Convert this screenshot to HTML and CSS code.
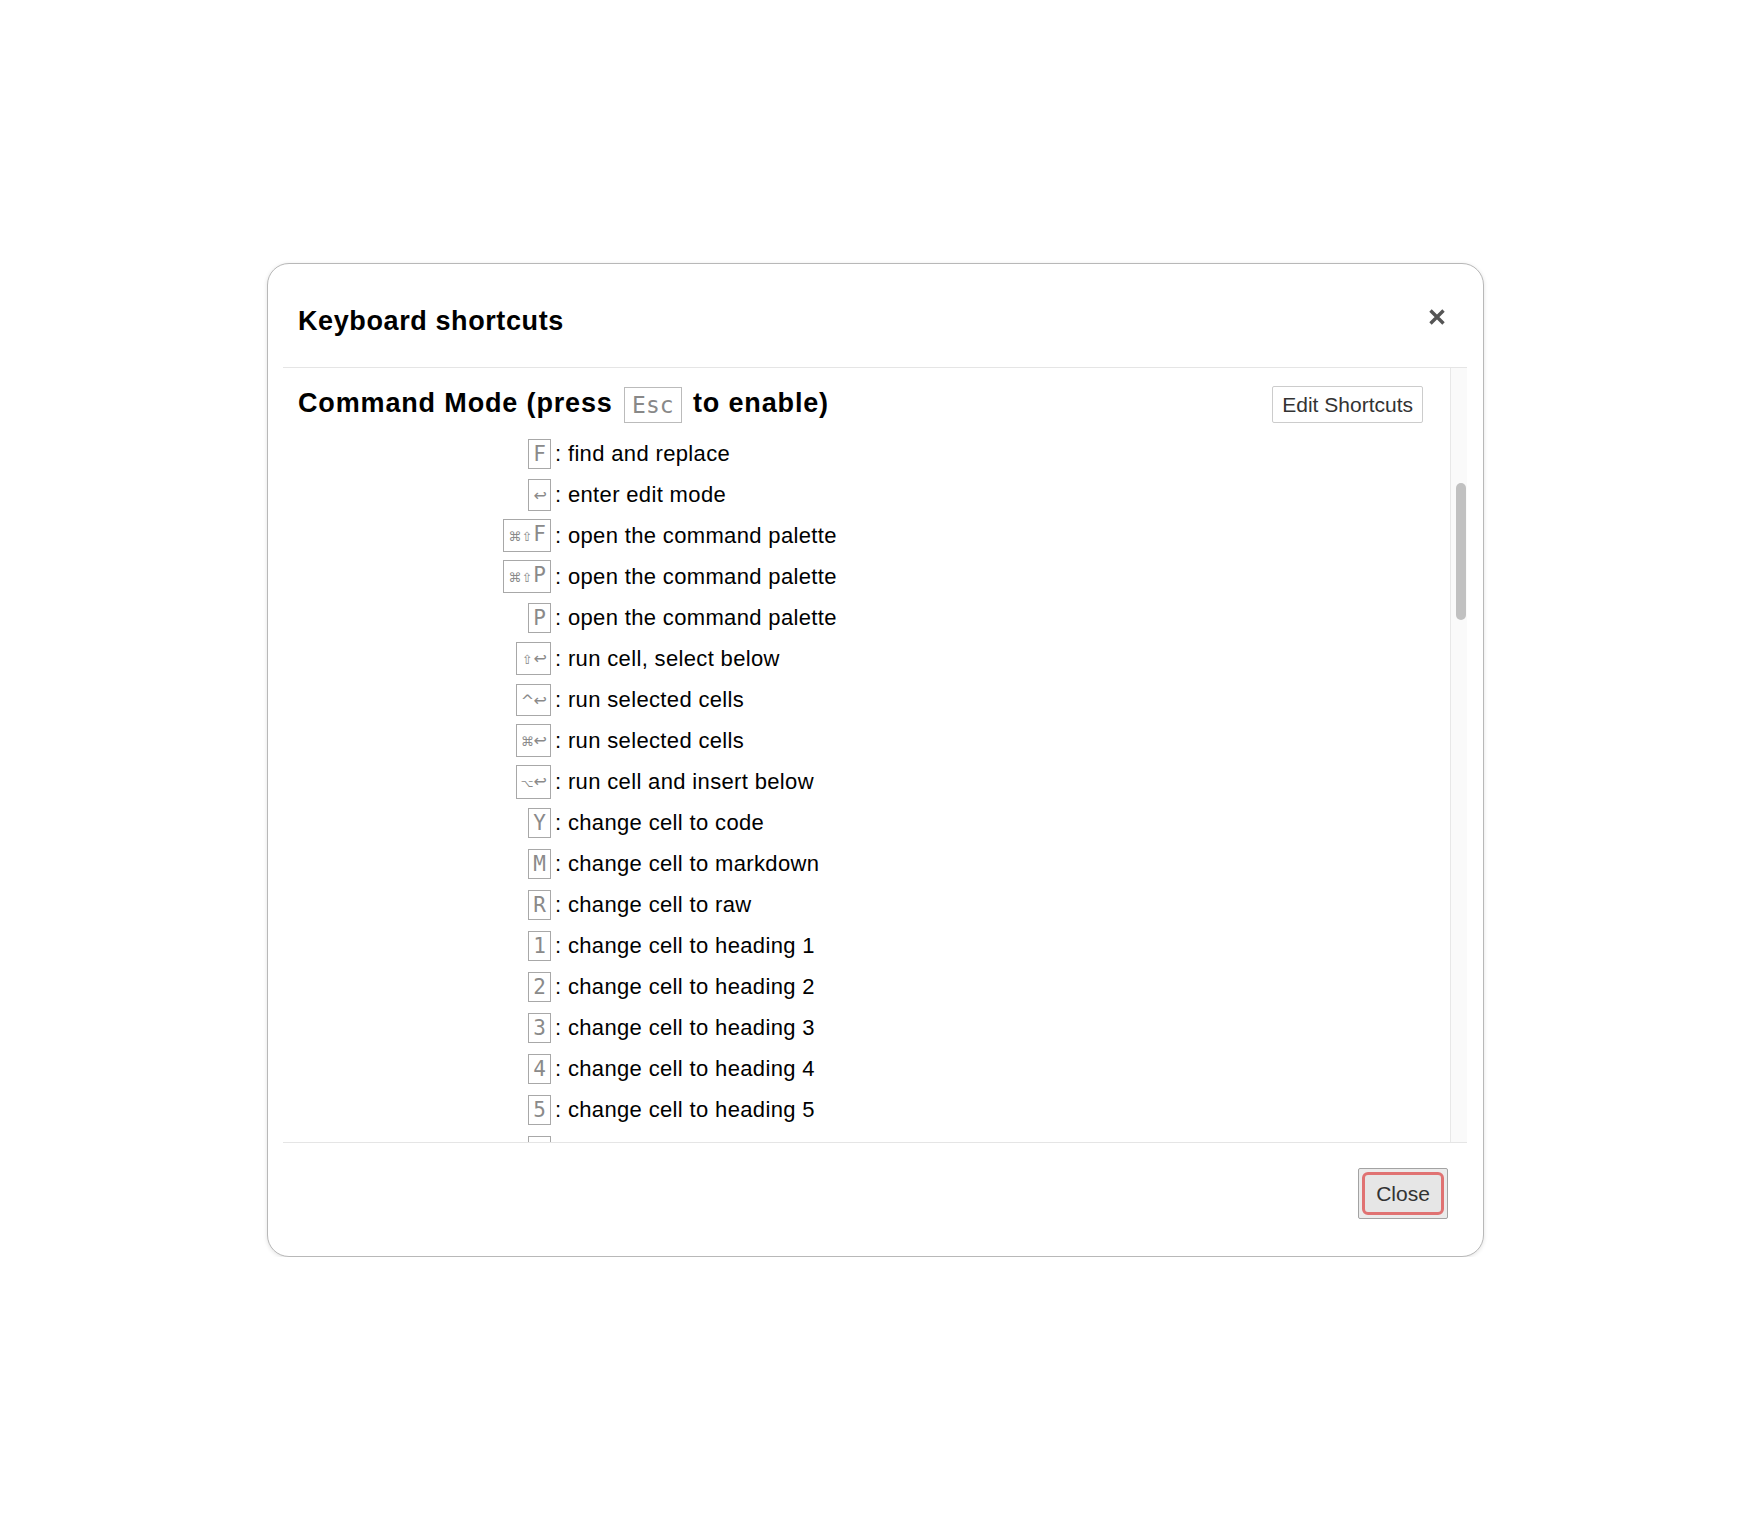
FILE: index.html
```html
<!DOCTYPE html>
<html lang="en">
<head>
<meta charset="utf-8">
<title>Keyboard shortcuts</title>
<link rel="stylesheet" href="styles.css">
</head>
<body>
<div class="modal">
  <div class="modal-inner">
    <div class="modal-header">
      <h4 class="modal-title">Keyboard shortcuts</h4>
      <button class="close" aria-label="Close">
        <svg width="16" height="16" viewBox="0 0 16 16"><path d="M1.5 1.5 L14.5 14.5 M14.5 1.5 L1.5 14.5" stroke="#555" stroke-width="3.4" fill="none"/></svg>
      </button>
    </div>
    <div class="modal-body">
      <div class="scroll-content">
        <div class="mode-head">
          <h4 class="mode-title">Command Mode (press <kbd class="esc">Esc</kbd> to enable)</h4>
          <button class="edit-btn">Edit Shortcuts</button>
        </div>
        <div class="quickhelp">
          <div class="row"><span class="key"><kbd>F</kbd></span><span class="descr">: find and replace</span></div>
          <div class="row"><span class="key"><kbd><span class="sym">↩</span></kbd></span><span class="descr">: enter edit mode</span></div>
          <div class="row"><span class="key"><kbd><span class="sym sm">⌘</span><span class="sym sm">⇧</span>F</kbd></span><span class="descr">: open the command palette</span></div>
          <div class="row"><span class="key"><kbd><span class="sym sm">⌘</span><span class="sym sm">⇧</span>P</kbd></span><span class="descr">: open the command palette</span></div>
          <div class="row"><span class="key"><kbd>P</kbd></span><span class="descr">: open the command palette</span></div>
          <div class="row"><span class="key"><kbd><span class="sym sm">⇧</span><span class="sym">↩</span></kbd></span><span class="descr">: run cell, select below</span></div>
          <div class="row"><span class="key"><kbd><span class="sym">^</span><span class="sym">↩</span></kbd></span><span class="descr">: run selected cells</span></div>
          <div class="row"><span class="key"><kbd><span class="sym sm">⌘</span><span class="sym">↩</span></kbd></span><span class="descr">: run selected cells</span></div>
          <div class="row"><span class="key"><kbd><span class="sym xs">⌥</span><span class="sym">↩</span></kbd></span><span class="descr">: run cell and insert below</span></div>
          <div class="row"><span class="key"><kbd>Y</kbd></span><span class="descr">: change cell to code</span></div>
          <div class="row"><span class="key"><kbd>M</kbd></span><span class="descr">: change cell to markdown</span></div>
          <div class="row"><span class="key"><kbd>R</kbd></span><span class="descr">: change cell to raw</span></div>
          <div class="row"><span class="key"><kbd>1</kbd></span><span class="descr">: change cell to heading 1</span></div>
          <div class="row"><span class="key"><kbd>2</kbd></span><span class="descr">: change cell to heading 2</span></div>
          <div class="row"><span class="key"><kbd>3</kbd></span><span class="descr">: change cell to heading 3</span></div>
          <div class="row"><span class="key"><kbd>4</kbd></span><span class="descr">: change cell to heading 4</span></div>
          <div class="row"><span class="key"><kbd>5</kbd></span><span class="descr">: change cell to heading 5</span></div>
          <div class="row"><span class="key"><kbd>6</kbd></span><span class="descr">: change cell to heading 6</span></div>
          <div class="row"><span class="key"><kbd>K</kbd></span><span class="descr">: select cell above</span></div>
          <div class="row"><span class="key"><kbd>J</kbd></span><span class="descr">: select cell below</span></div>
        </div>
      </div>
      <div class="track"><div class="thumb"></div></div>
    </div>
    <div class="modal-footer">
      <button class="close-btn"><span class="close-ring">Close</span></button>
    </div>
  </div>
</div>
</body>
</html>
```
FILE: styles.css
```css
* { box-sizing: border-box; }
html, body { margin: 0; padding: 0; background: #fff; }
body { font-family: "Liberation Sans", Arial, sans-serif; color: #000; }

.modal {
  width: 1217px;
  margin: 263px auto 0;
  border: 1px solid #b8b8b8;
  border-radius: 22px;
  box-shadow: 0 1px 4px rgba(0, 0, 0, 0.12);
  background: #fff;
}
.modal-inner { margin: 0 16px 0 15px; }

.modal-header {
  display: flex;
  justify-content: space-between;
  align-items: flex-start;
  height: 104px;
  border-bottom: 1px solid #e5e5e5;
}
.modal-title {
  margin: 0;
  padding: 39px 0 0 15px;
  font-size: 27px;
  line-height: 36px;
  font-weight: 700;
  letter-spacing: 0.6px;
}
.close {
  margin: 45px 22px 0 0;
  padding: 0;
  border: 0;
  background: none;
  width: 16px;
  height: 16px;
}
.close svg { display: block; }

.modal-body { display: flex; height: 774px; }
.scroll-content { flex: 1; overflow: hidden; padding: 15px 27px 0 15px; }
.track { width: 17px; border-left: 1px solid #e8e8e8; background: #fafafa; }
.thumb {
  width: 10px;
  height: 137px;
  margin: 115px 0 0 5px;
  border-radius: 5px;
  background: #c1c1c1;
}

.mode-head { display: flex; justify-content: space-between; align-items: flex-start; height: 40px; }
.mode-title {
  margin: 0;
  padding-top: 2px;
  font-size: 27px;
  line-height: 36px;
  font-weight: 700;
  letter-spacing: 0.85px;
  white-space: nowrap;
}
.esc {
  display: inline-block;
  font-family: "DejaVu Sans Mono", monospace;
  font-weight: 400;
  font-size: 23px;
  line-height: 32px;
  letter-spacing: 0;
  color: #888;
  border: 1px solid #bbb;
  padding: 1px 7px;
  margin: 0 3px;
  vertical-align: middle;
}
.edit-btn {
  margin-top: 3px;
  height: 37px;
  padding: 0 9px;
  font-family: "Liberation Sans", Arial, sans-serif;
  font-size: 21px;
  line-height: 35px;
  color: #333;
  background: #fff;
  border: 1px solid #ccc;
  border-radius: 2px;
}

.quickhelp { margin-top: 10px; }
.row { display: flex; align-items: center; height: 41px; }
.key { width: 253px; flex: none; display: flex; justify-content: flex-end; }
.key kbd {
  display: inline-block;
  font-family: "DejaVu Sans Mono", monospace;
  font-size: 21px;
  line-height: 28px;
  color: #8a8a8a;
  border: 1px solid #a8a8a8;
  padding: 0 4px;
  white-space: nowrap;
}
.sym {
  display: inline-block;
  width: 12.6px;
  text-align: center;
  font-family: "DejaVu Sans", sans-serif;
  font-size: 16px;
}
.sym.sm { font-size: 13px; }
.sym.xs { font-size: 11px; }
.descr {
  padding-left: 4px;
  font-size: 22px;
  line-height: 41px;
  letter-spacing: 0.35px;
  white-space: nowrap;
}

.modal-footer {
  display: flex;
  justify-content: flex-end;
  border-top: 1px solid #e5e5e5;
  padding: 25px 19px 37px 0;
}
.close-btn {
  width: 90px;
  height: 51px;
  padding: 3px;
  border: 1px solid #a3a3a3;
  border-radius: 2px;
  background: #ebebeb;
  font-family: "Liberation Sans", Arial, sans-serif;
}
.close-ring {
  display: block;
  height: 100%;
  border: 3px solid #e07272;
  border-radius: 6px;
  background: #e6e6e6;
  color: #333;
  font-size: 21px;
  line-height: 37px;
  text-align: center;
}
```
